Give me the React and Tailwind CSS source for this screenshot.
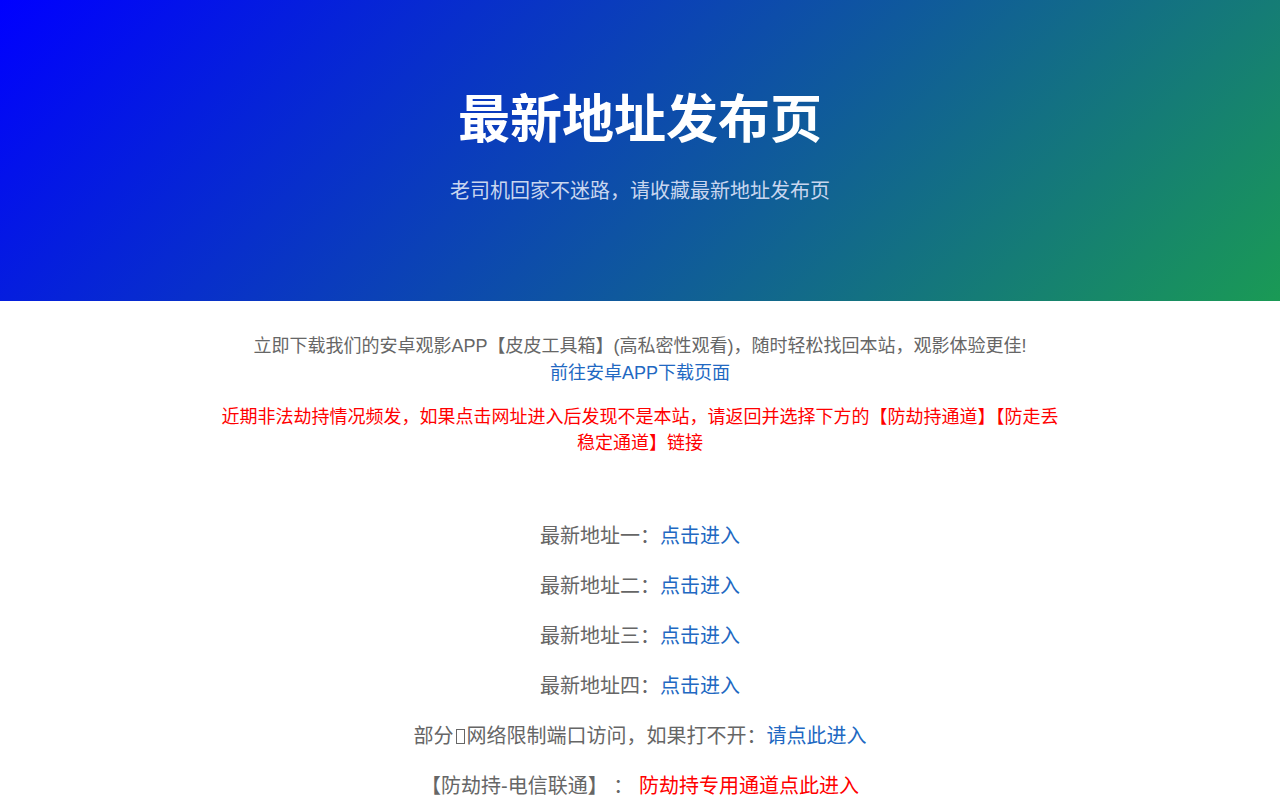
import React from "react";

const addresses = ["一", "二", "三", "四"];

export default function App() {
  return (
    <div className="min-h-[800px] bg-white font-['Liberation_Sans','Noto_Sans_CJK_SC',sans-serif] text-[#666]">
      {/* Header */}
      <header className="h-[301px] bg-[linear-gradient(135deg,#0000ff,#1a9a55)] flex flex-col items-center pt-[86px]">
        <h1 className="text-[52px] leading-[68px] font-bold text-white">最新地址发布页</h1>
        <p className="mt-[22px] text-[20px] leading-[30px] text-[#c9d6ef]">老司机回家不迷路，请收藏最新地址发布页</p>
      </header>

      {/* Content */}
      <main className="w-[840px] mx-auto text-center pt-[32px]">
        <p className="text-[18px] leading-[27px]">
          立即下载我们的安卓观影APP【皮皮工具箱】(高私密性观看)，随时轻松找回本站，观影体验更佳!
        </p>
        <p className="text-[18px] leading-[27px]">
          <a href="#" className="text-[#2168c2]">前往安卓APP下载页面</a>
        </p>
        <p className="mt-[17px] text-[18px] leading-[26px] text-[#ff0000]">
          近期非法劫持情况频发，如果点击网址进入后发现不是本站，请返回并选择下方的【防劫持通道】【防走丢稳定通道】链接
        </p>

        <div className="mt-[65px] flex flex-col gap-[20px] text-[20px] leading-[30px]">
          {addresses.map((n) => (
            <p key={n}>
              最新地址{n}：<a href="#" className="text-[#2168c2]">点击进入</a>
            </p>
          ))}
          <p>
            部分<span className="inline-block w-[9px] h-[15px] border border-[#666] mx-[2px] align-[-1px]"></span>网络限制端口访问，如果打不开：
            <a href="#" className="text-[#2168c2]">请点此进入</a>
          </p>
          <p>
            【防劫持-电信联通】 ：{" "}
            <a href="#" className="text-[#ff0000]">防劫持专用通道点此进入</a>
          </p>
        </div>
      </main>
    </div>
  );
}
